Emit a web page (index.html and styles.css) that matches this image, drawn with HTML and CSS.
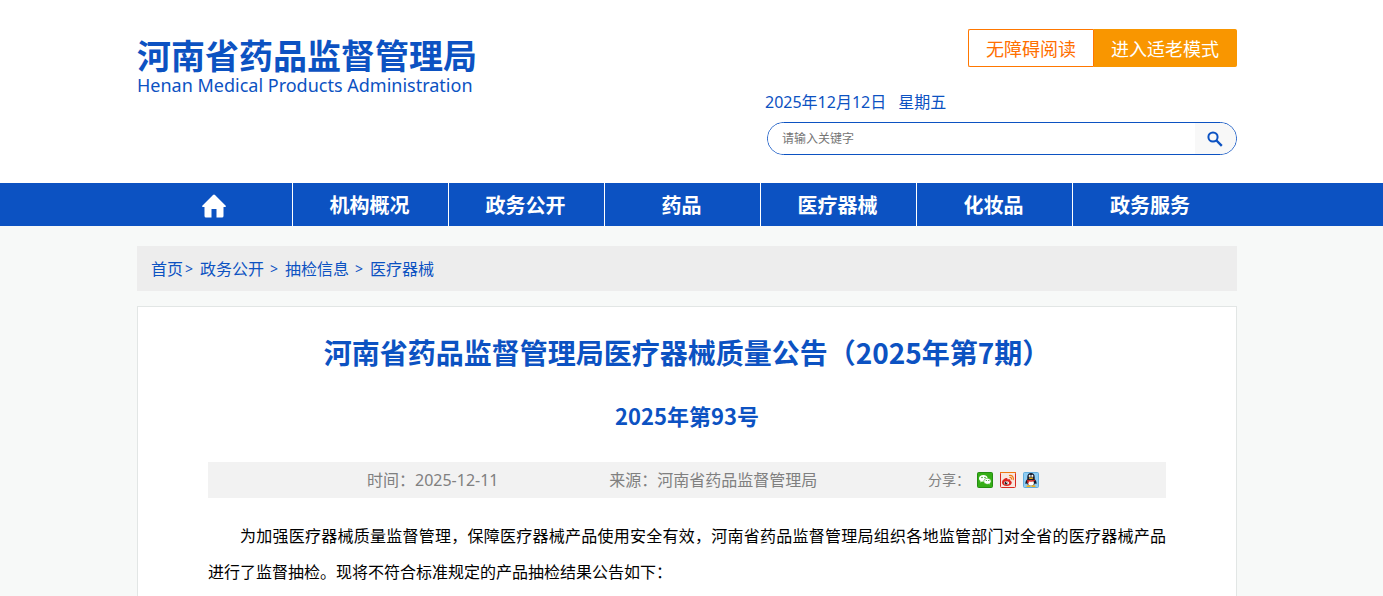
FILE: index.html
```html
<!DOCTYPE html>
<html lang="zh-CN">
<head>
<meta charset="utf-8">
<title>河南省药品监督管理局医疗器械质量公告（2025年第7期）</title>
<link rel="stylesheet" href="styles.css">
</head>
<body>
<header class="page-row header">
  <div class="container header-inner">
    <a class="logo" href="#">
      <span class="logo-cn">河南省药品监督管理局</span>
      <span class="logo-en" lang="en">Henan Medical Products Administration</span>
    </a>
    <div class="tools">
      <div class="modes">
        <button class="mode mode-read" type="button">无障碍阅读</button>
        <button class="mode mode-elder" type="button">进入适老模式</button>
      </div>
      <p class="date"><span>2025年12月12日</span><span>星期五</span></p>
      <form class="search">
        <input class="search-input" type="text" placeholder="请输入关键字" aria-label="请输入关键字">
        <button class="search-button" type="submit" aria-label="搜索">
          <svg width="16" height="16" viewBox="0 0 16 16" fill="none" stroke="#0c52c2" aria-hidden="true"><circle cx="6" cy="6" r="4.6" stroke-width="2"/><path d="M9.5 9.5l5.3 5.3" stroke-width="2.4"/></svg>
        </button>
      </form>
    </div>
  </div>
</header>
<nav class="page-row nav">
  <div class="container nav-list">
    <a class="nav-item" href="#" aria-label="首页"><svg width="24" height="24" viewBox="0 0 24 24" fill="#fff" aria-hidden="true"><path d="M12 .5Q12.5.5 13 1L24 12Q24 13 23 13H21.500V22Q21.500 23.500 20 23.500H14.500V15H9.500V23.500H4Q2.500 23.500 2.500 22V13H1Q0 13 0 12L11 1Q11.500.5 12 .5Z"/></svg></a>
    <a class="nav-item" href="#">机构概况</a>
    <a class="nav-item" href="#">政务公开</a>
    <a class="nav-item" href="#">药品</a>
    <a class="nav-item" href="#">医疗器械</a>
    <a class="nav-item" href="#">化妆品</a>
    <a class="nav-item" href="#">政务服务</a>
  </div>
</nav>
<main class="page-row">
  <div class="container">
    <div class="crumbs">
      <div class="crumb-home"><a href="#">首页</a><span class="crumb-sep">&gt;</span></div>
      <a href="#">政务公开</a>
      <span class="crumb-sep">&gt;</span>
      <a href="#">抽检信息</a>
      <span class="crumb-sep">&gt;</span>
      <a href="#">医疗器械</a>
    </div>
    <article class="article">
      <h1 class="title">河南省药品监督管理局医疗器械质量公告（2025年第7期）</h1>
      <h2 class="subtitle">2025年第93号</h2>
      <div class="meta">
        <span>时间：2025-12-11</span>
        <span>来源：河南省药品监督管理局</span>
        <div class="share">
          <span>分享：</span>
          <a href="#" aria-label="微信"><svg width="16" height="16" viewBox="0 0 16 16" aria-hidden="true"><rect x=".5" y=".5" width="15" height="15" rx="1" fill="#35ae16" stroke="#258c12"/><path d="M6.300 3C3.800 3 2 4.500 2 6.400c0 1.100.6 2 1.600 2.600L3.200 10.500l1.700-.9 1.600.2C9 9.800 10.700 8.300 10.700 6.400S8.800 3 6.300 3Z" fill="#fff"/><path d="M10.400 6.300c-2 0-3.600 1.300-3.600 3s1.600 3 3.600 3l1.200-.2 1.500.8-.4-1.300c.9-.6 1.400-1.400 1.400-2.300 0-1.700-1.600-3-3.700-3Z" fill="#fff" stroke="#35ae16" stroke-width=".6"/><g fill="#258c12"><circle cx="5" cy="5.500" r=".7"/><circle cx="8" cy="5.500" r=".7"/><circle cx="9.300" cy="8.500" r=".6"/><circle cx="11.800" cy="8.500" r=".6"/></g></svg></a>
          <a href="#" aria-label="微博"><svg width="16" height="16" viewBox="0 0 16 16" aria-hidden="true"><rect x=".5" y=".5" width="15" height="15" rx="1" fill="#f8e7df" stroke="#d92a20"/><path d="M0 .5h16" stroke="#ee7a12"/><path d="M2 10.400C2 8 5 5.700 6.700 5.900c1 .1.900 1.200.7 1.700 1.500-.7 3.400-.6 2.900 1.100 2.700.8 1.800 5.100-3.500 5.200C4 13.900 2 12.400 2 10.400Z" fill="#db251f"/><ellipse cx="6.500" cy="10.900" rx="2.700" ry="1.700" fill="#fff"/><circle cx="6" cy="10.900" r="1.500" fill="#222"/><circle cx="6.500" cy="10.300" r=".5" fill="#fff"/><path d="M9 3.500c3.100-.8 5.100 1.800 4.200 4.600M9.500 5.500c1.500-.4 2.400.7 1.900 2" fill="none" stroke="#ee7a12" stroke-width="1.200"/></svg></a>
          <a href="#" aria-label="QQ"><svg width="16" height="16" viewBox="0 0 16 16" aria-hidden="true"><rect x=".5" y=".5" width="15" height="15" rx="1" fill="#8fcdf3" stroke="#63addd"/><path d="M4.300 5C4.300 2.500 5.800 1 8 1s3.700 1.500 3.700 4v2c1.500 1.500 2.200 3.500 1.700 5-.7.300-1-.5-1.400-1-.3 2-2 3-4 3s-3.700-1-4-3c-.4.500-.7 1.300-1.400 1-.5-1.500.2-3.500 1.700-5Z" fill="#151b2b"/><ellipse cx="8" cy="11" rx="2.900" ry="2.800" fill="#fff"/><ellipse cx="6.700" cy="4.100" rx="1" ry="1.300" fill="#fff"/><ellipse cx="9.300" cy="4.100" rx="1" ry="1.300" fill="#fff"/><circle cx="7" cy="4.200" r=".4"/><circle cx="9" cy="4.200" r=".4"/><ellipse cx="8" cy="6.200" rx="2.300" ry=".8" fill="#f6b318"/><path d="M4.300 7.400Q8 9.300 11.700 7.400L12 8.800Q8 10.600 4 8.800Z" fill="#e02620"/><path d="M5 9v2.200" stroke="#e02620" stroke-width="1.400"/><ellipse cx="5.500" cy="14.200" rx="2.200" ry=".9" fill="#f6b318"/><ellipse cx="10.500" cy="14.200" rx="2.200" ry=".9" fill="#f6b318"/></svg></a>
        </div>
      </div>
      <p class="text">为加强医疗器械质量监督管理，保障医疗器械产品使用安全有效，河南省药品监督管理局组织各地监管部门对全省的医疗器械产品进行了监督抽检。现将不符合标准规定的产品抽检结果公告如下：</p>
    </article>
  </div>
</main>
</body>
</html>
```
FILE: styles.css
```css
* { box-sizing: border-box; }

body {
  margin: 0;
  background: #f7f9f8;
  color: #000;
  font: 16px/24px "Noto Sans", "Noto Sans CJK SC", sans-serif;
}

a { color: inherit; text-decoration: none; }
h1, h2, p { margin: 0; }
svg { display: block; }
button, input { font-family: inherit; }

.page-row { padding-right: 9px; }
.container { max-width: 1100px; margin: 0 auto; }

.header { background: #fff; color: #0c52c2; }
.header-inner {
  display: flex;
  justify-content: space-between;
  padding: 29px 0 28px;
}

.logo { display: flex; flex-direction: column; padding-top: 6px; }
.logo-cn { font: 700 34px/40px "Noto Sans CJK SC", sans-serif; }
.logo-en { font-size: 18px; line-height: 20px; }

.tools { width: 472px; }
.modes { display: flex; justify-content: flex-end; }
.mode {
  height: 38px;
  padding: 0 17px;
  border: 1px solid #f70;
  background: #fff;
  color: #ff6f00;
  font-size: 18px;
}
.mode-read { border-right: 0; border-radius: 2px 0 0 2px; }
.mode-elder {
  border-color: #f99600;
  border-left-color: #f70;
  border-radius: 0 2px 2px 0;
  background: #f99600;
  color: #fff;
}
.date { display: flex; gap: 12px; margin: 23px 0 8px; }

.search {
  display: flex;
  height: 33px;
  margin-left: 2px;
  overflow: hidden;
  border: 1px solid #0c52c2;
  border-radius: 17px;
}
.search-input {
  flex: 1;
  min-width: 0;
  padding: 0 14px;
  border: 0;
  outline: 0;
  background: #fff;
  font-size: 12px;
}
.search-input::placeholder { color: #757575; }
.search-button {
  display: grid;
  place-items: center;
  width: 41px;
  padding: 0 2px 0 0;
  border: 0;
  background: #f8f8f8;
}

.nav { background: #0c52c2; }
.nav-list { display: flex; }
.nav-item {
  display: flex;
  flex: 0 1 156px;
  justify-content: center;
  align-items: center;
  height: 43px;
  padding: 2px 2px 0 0;
  border-right: 1px solid #fff;
  color: #fff;
  font-size: 20px;
  font-weight: 700;
}
.nav-item:last-child { border-right: 0; }

.crumbs {
  display: flex;
  gap: 6px;
  margin: 20px 0 15px;
  padding: 11px 14px 10px;
  background: #ededed;
  color: #0c52c2;
}
.crumb-home { display: flex; gap: 2px; }
.crumb-sep { width: 9px; font-size: 14px; }

.article {
  padding: 25px 70px 27px;
  border: 1px solid #e2e6e5;
  background: #fff;
}
.title {
  color: #0c52c2;
  font: 700 28px/40px "Noto Sans CJK SC", sans-serif;
  text-align: center;
}
.subtitle {
  margin: 26px 0 30px;
  color: #0c52c2;
  font: 700 22px/34px "Noto Sans CJK SC", sans-serif;
  text-align: center;
}
.meta {
  display: flex;
  justify-content: space-between;
  align-items: center;
  height: 36px;
  margin-bottom: 20px;
  padding: 0 127px 0 159px;
  background: #f2f2f2;
  color: #808080;
}
.share { display: flex; align-items: center; gap: 7px; font-size: 14px; }
.text { line-height: 36px; text-align: justify; text-indent: 32px; }
```
